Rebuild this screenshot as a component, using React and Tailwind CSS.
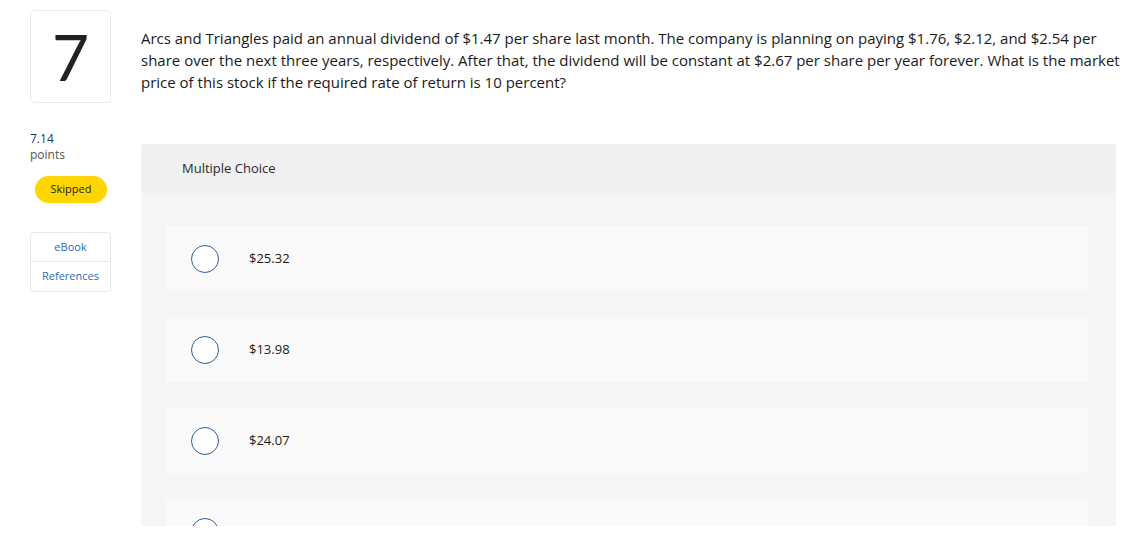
export default function App() {
  const options = ["$25.32", "$13.98", "$24.07", "$27.86"];
  return (
    <div className="flex h-[526px] overflow-hidden bg-white text-[#1a1a1a]" style={{ fontFamily: "'Open Sans', sans-serif" }}>
      <div className="w-[141px] shrink-0 pl-[30px] pt-[10px]">
        <div className="flex h-[93px] w-[81px] items-center justify-center rounded-[4px] border border-[#ebebeb] bg-white">
          <span className="text-[64px] font-normal leading-none text-[#222]" style={{ fontFamily: "Lato, sans-serif" }}>7</span>
        </div>
        <div className="mt-[27px] text-[12px] leading-[17px] text-[#1f3b5c]">7.14</div>
        <div className="text-[12px] leading-[15px] text-[#555]">points</div>
        <div className="ml-[5px] mt-[14px] flex h-[27px] w-[72px] items-center justify-center rounded-full bg-[#ffd600] text-[11px] text-[#222]">Skipped</div>
        <div className="mt-[29px] flex w-[81px] flex-col rounded-[4px] border border-[#e6e6e6] text-[11px] text-[#2c6bb1]">
          <div className="flex h-[29px] items-center justify-center border-b border-[#e6e6e6]">eBook</div>
          <div className="flex h-[29px] items-center justify-center">References</div>
        </div>
      </div>
      <div className="flex min-w-0 flex-1 flex-col pr-[18px] pt-[27px]">
        <p className="-mr-[14px] text-[15px] leading-[22px] text-[#1a1a1a]">
          Arcs and Triangles paid an annual dividend of $1.47 per share last month. The company is planning on paying $1.76, $2.12, and $2.54 per share over the next three years, respectively. After that, the dividend will be constant at $2.67 per share per year forever. What is the market price of this stock if the required rate of return is 10 percent?
        </p>
        <div className="mt-[51px] flex flex-1 flex-col rounded-t-[4px] bg-[#f5f5f5]">
          <div className="flex h-[49px] shrink-0 items-center rounded-t-[4px] bg-[#f0f0f0] pl-[41px] text-[13px] text-[#2b2b2b]">Multiple Choice</div>
          <div className="flex flex-col gap-[26px] pl-[25px] pr-[28px] pt-[33px]">
            {options.map((o) => (
              <div key={o} className="flex h-[65px] shrink-0 items-center rounded-[4px] bg-[#fafafa] pl-[25px]">
                <span className="h-[28px] w-[28px] shrink-0 rounded-full border-[1.5px] border-[#2d5f8f] bg-white"></span>
                <span className="ml-[30px] text-[13px] text-[#1a1a1a]">{o}</span>
              </div>
            ))}
          </div>
        </div>
      </div>
    </div>
  );
}
